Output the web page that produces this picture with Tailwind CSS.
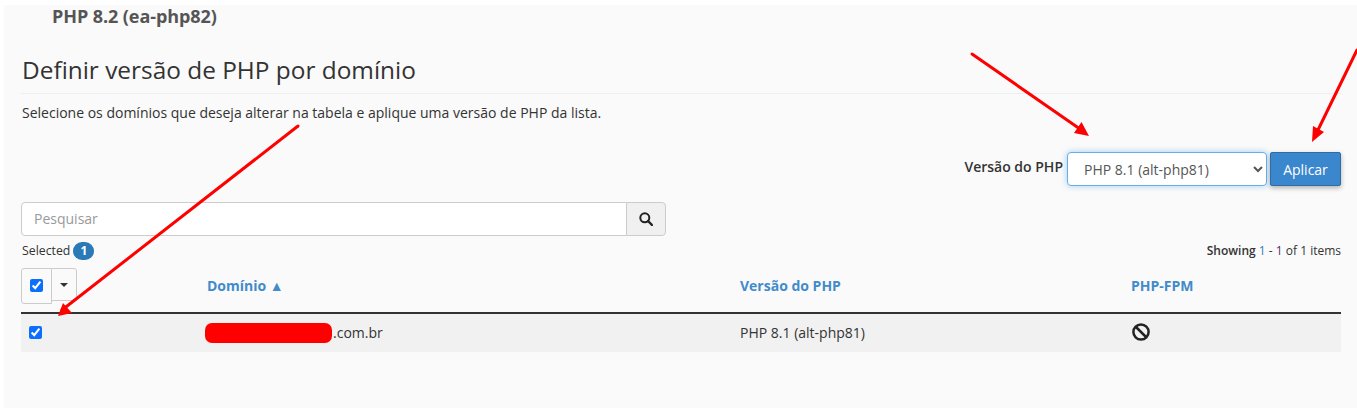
<!doctype html>
<html><head><meta charset="utf-8">
<script src="https://cdn.jsdelivr.net/npm/@tailwindcss/browser@4"></script>
</head>
<body class="bg-white overflow-hidden">
<div class="relative w-[1357px] h-[409px] overflow-hidden font-['Open_Sans',sans-serif] text-[#333]">
  <div class="ml-[4px] mt-[5px] h-[403px] w-[1353px] bg-[#fafafa] pl-[17px] pr-[16px] flex flex-col">
    <div class="pl-[31px] h-[24px] text-[18px] leading-[23px] font-bold text-[#555] tracking-[-0.08px]">PHP 8.2 (ea-php82)</div>
    <h2 class="mt-[24px] h-[41px] pl-px border-b border-[#eeeeee] text-[24.4px] leading-[33px] font-normal text-[#333]">Definir versão de PHP por domínio</h2>
    <p class="mt-[9px] h-[20px] pl-px text-[14px] leading-[20px]">Selecione os domínios que deseja alterar na tabela e aplique uma versão de PHP da lista.</p>
    <div class="mt-[29px] flex justify-end items-start h-[34px]">
      <span class="mt-[5px] mr-[4px] text-[14px] leading-[20px] font-semibold">Versão do PHP</span>
      <select class="w-[200px] h-[34px] rounded-[4px] bg-white border border-[#66afe9] shadow-[0_0_6px_rgba(102,175,233,0.6)] pl-[12px] text-[14px] text-[#555] outline-none"><option>PHP 8.1 (alt-php81)</option></select>
      <button class="ml-[3px] w-[71px] h-[34px] rounded-[2px] bg-[#3a87cd] border border-[#2e6da4] text-white text-[14px] shadow-[0_2px_5px_rgba(0,0,0,0.3)]">Aplicar</button>
    </div>
    <div class="mt-[16px] flex h-[34px] w-[645px]">
      <input placeholder="Pesquisar" class="flex-1 min-w-0 h-full bg-white border border-[#ccc] rounded-l-[4px] px-[12px] pb-[2px] text-[14px] outline-none placeholder:text-[#999]">
      <button class="w-[40px] h-full -ml-px bg-[#f0f0f0] border border-[#ccc] rounded-r-[4px] flex items-center justify-center">
        <svg viewBox="0 0 14 14" class="w-[14px] h-[14px]" fill="none" stroke="#222" stroke-width="2"><circle cx="5.8" cy="5.8" r="4.5"/><path d="M9 9l4 4" stroke-width="2.4" stroke-linecap="round"/></svg>
      </button>
    </div>
    <div class="mt-[5px] h-[20px] flex items-center justify-between text-[12px]">
      <div class="flex items-center pl-px"><span class="text-[12.3px]">Selected</span><span class="ml-[3px] w-[21px] h-[18px] rounded-full bg-[#2a7ab5] text-white font-bold text-[12px] leading-[18px] text-center">1</span></div>
      <div><span class="font-semibold">Showing</span> <span class="text-[#337ab7]">1</span> - <span class="text-[#5a2a6a]">1</span> of 1 items</div>
    </div>
    <div class="mt-[7px] flex h-[44px] items-start">
      <div class="w-[186px] flex">
        <div class="w-[31px] h-[36px] border border-[#ccc] rounded-l-[3px] flex items-center justify-center">
          <input type="checkbox" checked class="w-[13px] h-[13px] accent-[#0b6ffd] -mt-px">
        </div>
        <div class="w-[26px] h-[33px] -ml-px border border-[#ccc] rounded-r-[3px] flex items-center justify-center">
          <span class="w-0 h-0 border-x-[4px] border-x-transparent border-t-[4px] border-t-[#333]"></span>
        </div>
      </div>
      <div class="w-[533px] pt-[8px] text-[14px] leading-[20px] font-bold text-[#428bca]">Domínio ▲</div>
      <div class="w-[392px] pt-[8px] text-[14px] leading-[20px] font-bold text-[#428bca]">Versão do PHP</div>
      <div class="pt-[8px] -ml-px text-[14px] leading-[20px] font-bold text-[#428bca]">PHP-FPM</div>
    </div>
    <div class="h-[40px] border-t-2 border-[#333] bg-[#f1f1f1] flex items-center">
      <div class="w-[186px] pl-[8px] flex"><input type="checkbox" checked class="w-[13px] h-[13px] accent-[#0b6ffd] -mt-[1px]"></div>
      <div class="w-[533px] flex items-center text-[14px]">
        <span class="w-[127px] h-[20px] rounded-[7px] bg-[#ff0000] -ml-[2px]"></span><span class="-mt-[1px] ml-[1px]">.com.br</span>
      </div>
      <div class="w-[392px] text-[14px] -mt-[1px]">PHP 8.1 (alt-php81)</div>
      <svg viewBox="0 0 18 18" class="w-[18px] h-[18px] -mt-[2px]" fill="none" stroke="#222" stroke-width="2.5"><circle cx="9" cy="9" r="7.6"/><path d="M4 4l10 10"/></svg>
    </div>
  </div>
  <svg class="absolute inset-0 pointer-events-none" width="1357" height="409" viewBox="0 0 1357 409" fill="none">
    <g stroke="#ff0000" stroke-width="3" stroke-linecap="round">
      <path d="M972 54L1080 129"/>
      <path d="M1357 50L1317 132"/>
      <path d="M298 126L62 310"/>
    </g>
    <g fill="#ff0000">
      <path d="M1089 136L1074 133L1081.5 122Z"/>
      <path d="M1312 142L1313 126L1324 132Z"/>
      <path d="M58 316L63 303L72 313Z"/>
    </g>
  </svg>
</div>
</body></html>
